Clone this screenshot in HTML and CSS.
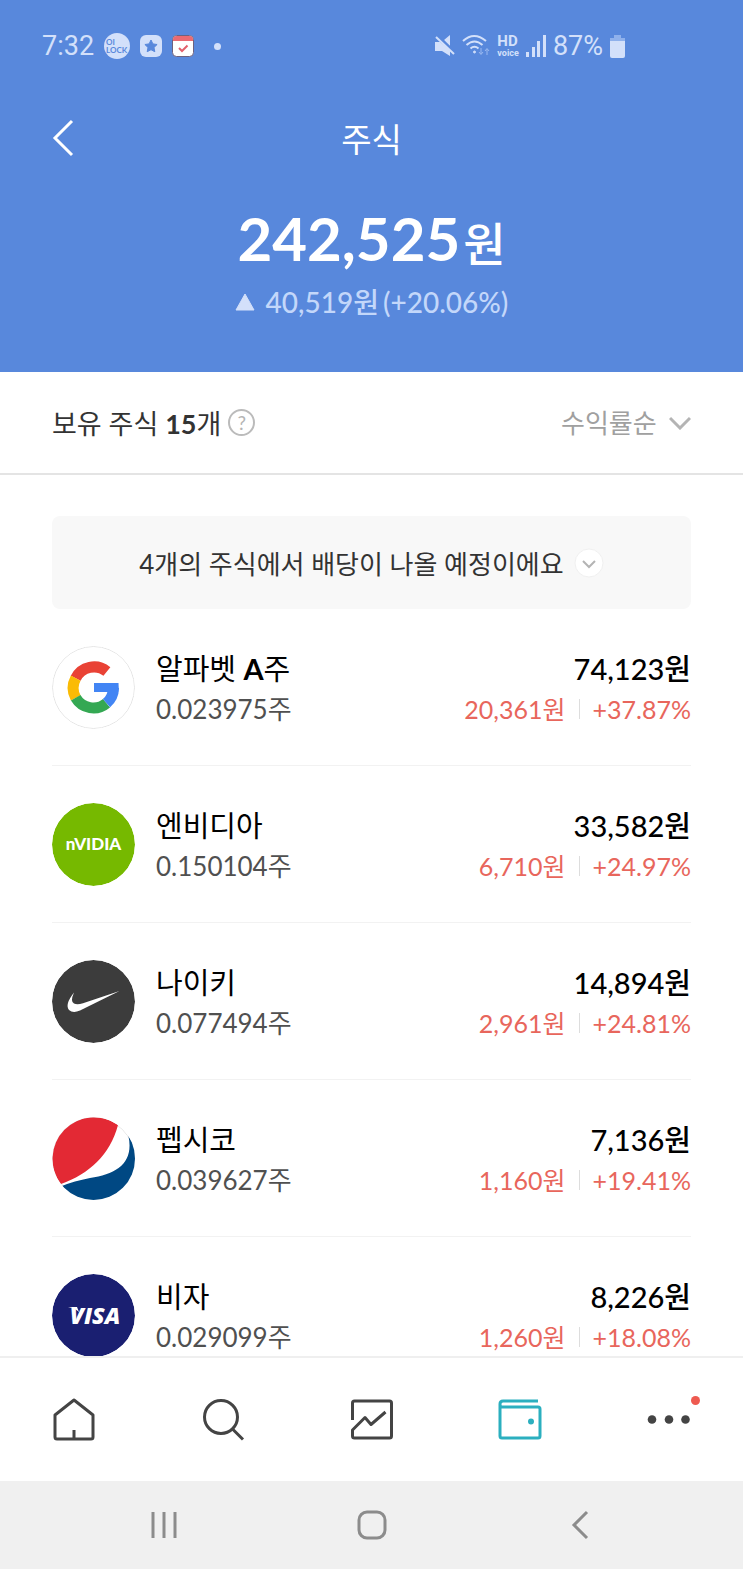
FILE: index.html
```html
<!DOCTYPE html>
<html lang="ko">
<head>
  <meta charset="UTF-8" />
  <meta name="viewport" content="width=device-width, initial-scale=1.0"/>
  <title>주식</title>
  <link rel="stylesheet" href="styles.css">
</head>
<body>
  <div class="app">

    <header class="header">
      <div class="status-bar">
        <div class="status-left">
          <span class="clock">7:32</span>
          <svg class="lock" width="26" height="26" viewBox="0 0 26 26">
            <circle cx="13" cy="13" r="13" fill="#d3e0fa"/>
            <text x="2" y="12" class="lock-text">OI</text>
            <text x="2" y="20" class="lock-text">LOCK</text>
          </svg>
          <svg class="star" width="22" height="22" viewBox="0 0 22 22">
            <rect width="22" height="22" rx="6" fill="#d3e0fa"/>
            <path d="M11 5l1.9 3.9 4.2.6-3.1 3 .8 4.2-3.8-2-3.8 2 .8-4.2-3.1-3 4.2-.6z" fill="#5888dc" stroke="#5888dc" stroke-linejoin="round"/>
          </svg>
          <svg class="calendar" width="22" height="22" viewBox="0 0 22 22">
            <rect x=".5" y=".5" width="21" height="21" rx="4" fill="#fff" stroke="#6c6280"/>
            <path d="M1 6V4.500Q1 1 4.500 1h13Q21 1 21 4.500V6z" fill="#ea6a72"/>
            <path d="M7 13l3 3 5.500-5.500" fill="none" stroke="#e2606c" stroke-width="2"/>
          </svg>
          <span class="status-dot"></span>
        </div>
        <div class="status-right">
          <svg width="20" height="22" viewBox="0 0 20 22">
            <path d="M0 7h5l10 8v6l-8-5H0zM9 5l6-5v11z" fill="#d3e0fa"/>
            <path d="M3 1l17 16" stroke="#5888dc" stroke-width="2"/>
            <path d="M1 2l18 17" stroke="#d3e0fa" stroke-width="2"/>
          </svg>
          <svg width="28" height="24" viewBox="0 0 28 24" fill="none" stroke="#d3e0fa" stroke-width="2">
            <path d="M1 7q11-10 23 0M4.500 11q8-7 16 0M8.500 14.500q4-3.500 8 0"/>
            <circle cx="12.500" cy="18" r="1" fill="#d3e0fa" stroke-width="1"/>
            <path d="M19 14v6m-2-2l2 2.500 2-2.500M25 21v-6m-2 2l2-2.500 2 2.500" stroke="#9ab9f0" stroke-width="1"/>
          </svg>
          <span class="hd"><b>HD</b><small>voice</small></span>
          <svg width="20" height="22" viewBox="0 0 20 22" fill="#d3e0fa">
            <path d="M0 17h3v5H0zM6 12h3v10H6zM11 6h3v16h-3zM17 0h3v22h-3z"/>
          </svg>
          <span class="battery-text">87%</span>
          <svg width="15" height="23" viewBox="0 0 15 23">
            <path d="M4 0h7v3h4v4H0V3h4z" fill="#8fb1ec"/>
            <path d="M0 6h15v15q0 2-2 2H2q-2 0-2-2z" fill="#d3e0fa"/>
          </svg>
        </div>
      </div>

      <div class="title-bar">
        <button class="back" aria-label="뒤로">
          <svg width="22" height="38" viewBox="0 0 22 38"><path d="M20 2L3 19l17 17" fill="none" stroke="#fff" stroke-width="3"/></svg>
        </button>
        <h1>주식</h1>
      </div>

      <p class="total">242,525<span>원</span></p>
      <p class="change">
        <svg width="20" height="18" viewBox="0 0 20 18"><path d="M10 1l9 16H1z" fill="#d3e0fa" stroke="#d3e0fa" stroke-linejoin="round"/></svg>
        <span>40,519원</span><span>(+20.06%)</span>
      </p>
    </header>

    <div class="sort-bar">
      <h2>보유 주식 <b>15</b>개</h2>
      <button class="help" aria-label="도움말">?</button>
      <label class="sort">
        <select aria-label="정렬">
          <option>수익률순</option>
        </select>
        <svg width="22" height="14" viewBox="0 0 22 14"><path d="M1 2l10 10L21 2" fill="none" stroke="#b4b4b4" stroke-width="3"/></svg>
      </label>
    </div>

    <main class="content">
      <button class="dividend">
        <span>4개의 주식에서 배당이 나올 예정이에요</span>
        <svg width="30" height="30" viewBox="0 0 30 30">
          <circle cx="15" cy="15" r="14" fill="#fff" stroke="#f0f0f0"/>
          <path d="M9 13l6 6 6-6" fill="none" stroke="#b4b4b4" stroke-width="2"/>
        </svg>
      </button>

      <ul class="stocks">
        <li class="stock">
          <svg class="logo" viewBox="0 0 83 83">
            <circle cx="41.500" cy="41.500" r="41" fill="#fff" stroke="#e4e4e4"/>
            <g fill="none" stroke-width="11">
              <path d="M54.900 25.500A20.500 20.500 0 0 0 23.700 32.200" stroke="#e94235"/>
              <path d="M23.700 32.200a20.500 20.500 0 0 0 0 19.600" stroke="#fabb05"/>
              <path d="M23.700 51.800A20.500 20.500 0 0 0 54.500 57.200" stroke="#34a853"/>
              <path d="M54.500 57.200A20.500 20.500 0 0 0 61.500 42" stroke="#4285f4"/>
            </g>
            <path d="M42 37h24.500q.6 5-.3 9H42z" fill="#4285f4"/>
          </svg>
          <div class="info"><strong>알파벳 <b>A</b>주</strong><span>0.023975주</span></div>
          <div class="value"><strong>74,123원</strong><span class="gain"><span>20,361원</span><span>+37.87%</span></span></div>
        </li>
        <li class="stock">
          <svg class="logo" viewBox="0 0 83 83">
            <circle cx="41.500" cy="41.500" r="41.500" fill="#76b900"/>
            <text x="41.500" y="47" class="nvidia-text">nVIDIA</text>
          </svg>
          <div class="info"><strong>엔비디아</strong><span>0.150104주</span></div>
          <div class="value"><strong>33,582원</strong><span class="gain"><span>6,710원</span><span>+24.97%</span></span></div>
        </li>
        <li class="stock">
          <svg class="logo" viewBox="0 0 83 83">
            <circle cx="41.500" cy="41.500" r="41.500" fill="#3c3c3c"/>
            <path d="M22 32.500q-4 9 0 11 3 1.500 9-.2L67.500 31 28 50.500q-7 3-11-.5-4.500-5.500 5-17.500z" fill="#fff"/>
          </svg>
          <div class="info"><strong>나이키</strong><span>0.077494주</span></div>
          <div class="value"><strong>14,894원</strong><span class="gain"><span>2,961원</span><span>+24.81%</span></span></div>
        </li>
        <li class="stock">
          <svg class="logo" viewBox="0 0 83 83">
            <circle cx="41.500" cy="41.500" r="41" fill="#fff" stroke="#e4e4e4"/>
            <path d="M66 8A41.500 41.500 0 0 0 9 67C37 57 58 38 66 8z" fill="#e32934"/>
            <path d="M76.500 19A41.500 41.500 0 0 1 10 69Q22 64 38 61C65 57 82 46 76.500 19z" fill="#004883"/>
          </svg>
          <div class="info"><strong>펩시코</strong><span>0.039627주</span></div>
          <div class="value"><strong>7,136원</strong><span class="gain"><span>1,160원</span><span>+19.41%</span></span></div>
        </li>
        <li class="stock">
          <svg class="logo" viewBox="0 0 83 83">
            <circle cx="41.500" cy="41.500" r="41.500" fill="#1a1f71"/>
            <text x="43" y="50" class="visa-text">VISA</text>
            <path d="M16 33h9l2 5q-4-4-11-5z" fill="#fff"/>
          </svg>
          <div class="info"><strong>비자</strong><span>0.029099주</span></div>
          <div class="value"><strong>8,226원</strong><span class="gain"><span>1,260원</span><span>+18.08%</span></span></div>
        </li>
      </ul>
    </main>

    <nav class="tabs">
      <a href="#" aria-label="홈">
        <svg width="44" height="44" viewBox="0 0 44 44"><path d="M22 2L3 17v22q0 2 2 2h34q2 0 2-2V17zM22 41v-9"/></svg>
      </a>
      <a href="#" aria-label="검색">
        <svg width="44" height="44" viewBox="0 0 44 44"><circle cx="20" cy="19" r="16.500"/><path d="M31.500 31L42 41.500"/></svg>
      </a>
      <a href="#" aria-label="차트">
        <svg width="44" height="44" viewBox="0 0 44 44"><path d="M2.500 22V5q0-2 2-2h35q2 0 2 2v33q0 2-2 2h-35q-2 0-2-2v-6l12.500-12.500 6 7L35.500 14"/></svg>
      </a>
      <a href="#" class="active" aria-label="자산">
        <svg width="44" height="44" viewBox="0 0 44 44"><path d="M40 3H5Q2 3 2 6v32q0 2 2 2h36q2 0 2-2V11q0-2-2-2H4Q2 9 2 6"/><circle cx="33" cy="23.500" r="1.500"/></svg>
      </a>
      <a href="#" aria-label="더보기">
        <svg width="44" height="44" viewBox="0 0 44 44" class="dots"><circle cx="5" cy="21.500" r="4.300"/><circle cx="22" cy="21.500" r="4.300"/><circle cx="38.500" cy="21.500" r="4.300"/></svg>
        <span class="badge"></span>
      </a>
    </nav>

    <div class="system-nav">
      <button aria-label="최근 앱"><svg width="30" height="30" viewBox="0 0 30 30"><path d="M4 2v26M15 2v26M26 2v26"/></svg></button>
      <button aria-label="홈 화면"><svg width="30" height="30" viewBox="0 0 30 30"><rect x="2" y="2" width="26" height="26" rx="8"/></svg></button>
      <button aria-label="이전"><svg width="30" height="30" viewBox="0 0 30 30"><path d="M22 2L9 15l13 13"/></svg></button>
    </div>

  </div>
</body>
</html>
```
FILE: styles.css
```css
* {
  box-sizing: border-box;
}

body {
  margin: 0;
  font-family: Lato, "Noto Sans CJK KR", sans-serif;
  background: #fff;
  color: #111;
}

h1, h2, p, ul {
  margin: 0;
  padding: 0;
}

button {
  border: none;
  padding: 0;
  background: none;
  font-family: inherit;
  cursor: pointer;
}

svg {
  display: block;
  flex-shrink: 0;
}

.app {
  display: flex;
  flex-direction: column;
  height: 100vh;
}

/* header */
.header {
  background: #5888dc;
  color: #fff;
  padding-bottom: 52px;
}

.status-bar {
  display: flex;
  justify-content: space-between;
  height: 92px;
  padding: 0 118px 0 42px;
  font-family: Roboto, sans-serif;
  font-size: 27px;
  color: #d3e0fa;
}

.status-left,
.status-right {
  display: flex;
  align-items: center;
}

.status-left {
  gap: 10px;
}

.status-right {
  gap: 7px;
}

.status-dot {
  width: 7px;
  height: 7px;
  margin-left: 10px;
  border-radius: 50%;
  background: #d3e0fa;
}

.lock-text {
  font: bold 8px Lato, sans-serif;
  fill: #5888dc;
}

.hd {
  display: flex;
  flex-direction: column;
}

.hd b {
  font-size: 15px;
  line-height: 13px;
}

.hd small {
  font-size: 9px;
  line-height: 10px;
  font-weight: bold;
}

.title-bar {
  display: grid;
  grid-template-columns: 22px 1fr 22px;
  align-items: center;
  height: 92px;
  padding: 0 52px;
}

.title-bar h1 {
  font-size: 33px;
  font-weight: 400;
  text-align: center;
}

.total {
  display: flex;
  justify-content: center;
  align-items: baseline;
  gap: 3px;
  height: 92px;
  margin-top: 8px;
  font-size: 60px;
  line-height: 92px;
  font-weight: bold;
}

.total span {
  font-size: 46px;
  font-weight: 500;
  line-height: 46px;
}

.change {
  display: flex;
  justify-content: center;
  align-items: center;
  gap: 4px;
  height: 36px;
  font-size: 28px;
  line-height: 36px;
  font-weight: 500;
  color: #c3d7fa;
}

.change svg {
  margin-right: 7px;
}

/* sort bar */
.sort-bar {
  display: flex;
  align-items: center;
  height: 103px;
  padding: 0 52px;
  border-bottom: 2px solid #e4e4e4;
}

.sort-bar h2 {
  font-size: 27px;
  font-weight: 400;
  color: #333;
}

.help {
  width: 27px;
  height: 27px;
  margin-left: 7px;
  border: 2px solid #bbb;
  border-radius: 50%;
  font-size: 19px;
  line-height: 22px;
  color: #b4b4b4;
}

.sort {
  display: flex;
  align-items: center;
  gap: 12px;
  margin-left: auto;
}

.sort select {
  appearance: none;
  border: none;
  padding: 0;
  background: none;
  font-family: inherit;
  font-size: 26px;
  color: #a0a0a0;
}

/* list */
.content {
  flex: 1;
  min-height: 0;
  padding: 41px 52px 0;
  overflow-y: auto;
  scrollbar-width: none;
}

.dividend {
  display: flex;
  justify-content: center;
  align-items: center;
  gap: 10px;
  width: 100%;
  height: 93px;
  border-radius: 8px;
  background: #f8f8f8;
  font-size: 26px;
  color: #333;
}

.stocks {
  list-style: none;
}

.stock {
  display: flex;
  gap: 21px;
  padding: 37px 0 36px;
  border-bottom: 1px solid #f2f2f2;
}

.logo {
  width: 83px;
  height: 83px;
  border-radius: 50%;
}

.nvidia-text {
  font: 900 17px Lato, sans-serif;
  text-anchor: middle;
  fill: #fff;
}

.visa-text {
  font: italic 800 23px "Open Sans", sans-serif;
  text-anchor: middle;
  fill: #fff;
}

.info,
.value {
  display: flex;
  flex-direction: column;
  padding-top: 2px;
  font-size: 26px;
  line-height: 40px;
  color: #505050;
}

.info strong,
.value strong {
  font-size: 29px;
  font-weight: 400;
  line-height: 41px;
  color: #000;
}

.value {
  margin-left: auto;
  text-align: right;
}

.value strong {
  font-weight: 500;
}

.gain {
  display: flex;
  justify-content: flex-end;
  align-items: center;
  font-size: 25px;
  color: #e8665c;
}

.gain span + span {
  margin-left: 13px;
  padding-left: 13px;
  line-height: 20px;
  border-left: 1px solid #ddd;
}

/* bottom tabs */
.tabs {
  display: flex;
  justify-content: space-between;
  height: 125px;
  padding: 0 52px;
  border-top: 2px solid #efefef;
  background: #fff;
}

.tabs a {
  position: relative;
  display: flex;
  align-items: center;
  color: #444;
}

.tabs svg {
  fill: none;
  stroke: currentColor;
  stroke-width: 3;
  stroke-linejoin: round;
}

.tabs .active {
  color: #2bafbf;
}

.tabs .dots {
  fill: currentColor;
  stroke: none;
}

.badge {
  position: absolute;
  top: 38px;
  right: -9px;
  width: 9px;
  height: 9px;
  border-radius: 50%;
  background: #ee5a50;
}

.system-nav {
  display: flex;
  justify-content: center;
  gap: 178px;
  height: 88px;
  background: #f0f0f0;
}

.system-nav svg {
  fill: none;
  stroke: #8c8c8c;
  stroke-width: 3;
}
```
